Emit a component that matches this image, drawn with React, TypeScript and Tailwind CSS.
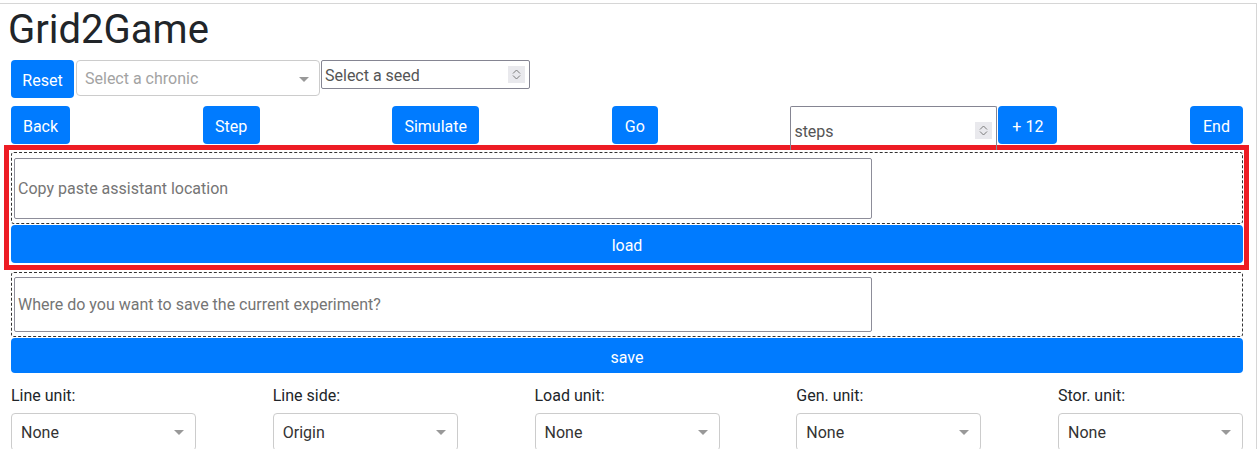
import React from "react";

const Caret = () => (
  <svg width="10" height="5" viewBox="0 0 10 5" className="shrink-0">
    <polygon points="0,0 10,0 5,5" fill="#999999" />
  </svg>
);

const Spinner = () => (
  <div className="flex h-[17px] w-[17px] flex-col items-center justify-center gap-[1px] bg-[#e9e9ed]">
    <svg width="9" height="5" viewBox="0 0 9 5">
      <polyline points="1,4.5 4.5,1 8,4.5" fill="none" stroke="#7a7a7a" strokeWidth="1" />
    </svg>
    <svg width="9" height="5" viewBox="0 0 9 5">
      <polyline points="1,0.5 4.5,4 8,0.5" fill="none" stroke="#7a7a7a" strokeWidth="1" />
    </svg>
  </div>
);

const Btn = ({ label, className }: { label: string; className: string }) => (
  <button
    className={`h-[38px] shrink-0 rounded-[4px] bg-[#007bff] pt-[4px] text-center text-base leading-6 text-white ${className}`}
  >
    {label}
  </button>
);

const UnitSelect = ({ label, value }: { label: string; value: string }) => (
  <div className="flex w-[185px] flex-col">
    <label className="mb-[6px] pt-[1px] text-base leading-[23px] text-[#212529]">{label}</label>
    <div className="flex h-[38px] items-center justify-between rounded-[4px] border border-[#cccccc] pl-[9px] pr-[11px] pt-[1px]">
      <span className="text-base text-[#333333]">{value}</span>
      <Caret />
    </div>
  </div>
);

const units = [
  { label: "Line unit:", value: "None" },
  { label: "Line side:", value: "Origin" },
  { label: "Load unit:", value: "None" },
  { label: "Gen. unit:", value: "None" },
  { label: "Stor. unit:", value: "None" },
];

export default function App() {
  return (
    <div className="h-[449px] w-[1258px] overflow-hidden bg-white pt-[3px] font-['Roboto','Liberation_Sans',sans-serif] text-[#212529]">
      <div className="h-full w-[1257px] border-t border-r border-[#d6d6d6] pl-[11px] pr-[13px]">
        <h1 className="-ml-[3px] mb-2 pt-[3px] text-[40px] font-normal leading-[45px]">Grid2Game</h1>

        {/* chronic + seed */}
        <div className="flex h-[38px] items-start">
          <Btn label="Reset" className="w-[63px]" />
          <div className="ml-[2px] flex h-[36px] w-[244px] items-center justify-between rounded-[4px] border border-[#cccccc] pl-[8px] pr-[10px] pt-[2px]">
            <span className="text-base text-[#a3a3a3]">Select a chronic</span>
            <Caret />
          </div>
          <div className="ml-[1px] flex h-[29px] w-[209px] items-center justify-between rounded-[2px] border border-[#858592] pl-[3px] pr-[4px]">
            <span className="pt-[2px] text-base leading-5 text-[#555555]">Select a seed</span>
            <Spinner />
          </div>
        </div>

        {/* navigation */}
        <div className="mt-2 flex h-[38px] items-start justify-between">
          <Btn label="Back" className="w-[59px]" />
          <Btn label="Step" className="w-[57px]" />
          <Btn label="Simulate" className="w-[87px]" />
          <Btn label="Go" className="w-[46px]" />
          <div className="flex items-start">
            <div className="relative z-10 flex h-[44px] w-[207px] items-center justify-between rounded-t-[2px] border border-b-0 border-[#858592] bg-transparent pl-[3px] pr-[4px] pt-[4px]">
              <span className="pt-[2px] text-base text-[#555555]">steps</span>
              <Spinner />
            </div>
            <Btn label="+ 12" className="ml-[1px] w-[59px]" />
          </div>
          <Btn label="End" className="w-[53px]" />
        </div>

        {/* load assistant (highlighted) */}
        <div className="-ml-[7px] -mr-[6px] mt-[1px] border-[5px] border-[#ed1c24] pb-[2px] pl-[2px] pr-[1px] pt-[2px]">
          <div className="h-[72px] rounded-[3px] border border-dashed border-[#333333] pl-[2px] pt-[5px]">
            <div className="flex h-[61px] w-[858px] items-center rounded-[2px] border border-[#8d8d99] pl-[3px] pt-[1px]">
              <span className="text-base text-[#757575]">Copy paste assistant location</span>
            </div>
          </div>
          <Btn label="load" className="mt-[1px] w-full" />
        </div>

        {/* save experiment */}
        <div className="mt-[2px] h-[65px] rounded-[3px] border border-dashed border-[#333333] pl-[2px] pt-[4px]">
          <div className="flex h-[55px] w-[858px] items-center rounded-[2px] border border-[#8d8d99] pl-[3px] pt-[1px]">
            <span className="text-base text-[#757575]">Where do you want to save the current experiment?</span>
          </div>
        </div>
        <button className="mt-[1px] h-[35px] w-full rounded-[4px] bg-[#007bff] pt-[4px] text-base leading-6 text-white">save</button>

        <div className="mt-[10px] flex justify-between">
          {units.map((u) => (
            <UnitSelect key={u.label} label={u.label} value={u.value} />
          ))}
        </div>
      </div>
    </div>
  );
}
